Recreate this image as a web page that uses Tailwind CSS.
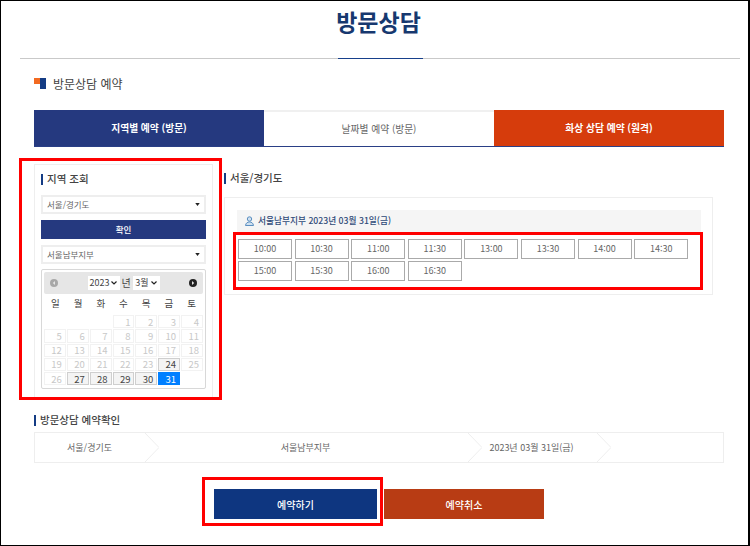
<!DOCTYPE html>
<html lang="ko">
<head>
  <meta charset="UTF-8" />
  <title>방문상담</title>
  <script src="https://cdn.jsdelivr.net/npm/@tailwindcss/browser@4"></script>
</head>
<body class="bg-white">
  <div class="relative w-[750px] h-[546px] box-border border-t border-l border-b border-black border-r-2 overflow-hidden bg-white text-[#555] [font-family:'Noto_Sans_CJK_KR','Noto_Sans',sans-serif]">

    <!-- Title -->
    <h1 class="h-[45px] pt-[4px] text-center text-[23px] leading-[32px] font-bold text-[#17386f] pl-[8px]">방문상담</h1>
    <div class="mt-[12px] ml-[19px] w-[720px] h-[1px] bg-[#c9c9c9] flex justify-center">
      <div class="w-[85px] h-[1px] bg-[#17408b]"></div>
    </div>

    <!-- Section heading -->
    <div class="ml-[33px] mt-[17px] h-[15px] flex items-center gap-[7px]">
      <span class="flex w-[12px] h-[11px] items-start">
        <span class="w-[6px] h-[6px] bg-[#f26a21]"></span>
        <span class="w-[6px] h-[11px] bg-[#143c84]"></span>
      </span>
      <span class="text-[12px] leading-[15px] text-[#444]">방문상담 예약</span>
    </div>

    <!-- Tabs -->
    <div class="ml-[33px] mt-[19px] w-[690px] h-[37px] flex text-[9.75px] font-semibold border-b border-[#2a3f86]">
      <div class="w-[230px] bg-[#25397f] text-white flex items-center justify-center">지역별 예약 (방문)</div>
      <div class="w-[230px] bg-white text-[#666] font-normal border-t-2 border-[#f0f0f0] flex items-center justify-center">날짜별 예약 (방문)</div>
      <div class="w-[230px] bg-[#d63c0c] text-white flex items-center justify-center">화상 상담 예약 (원격)</div>
    </div>

    <!-- Main columns -->
    <div class="ml-[33px] mt-[17px] flex items-start">
      <aside class="w-[179px] h-[236px] box-border border border-[#eeeeee] px-[6px]">
        <div class="h-[29px] pb-[1px] flex items-center gap-[4px] text-[10.5px] font-medium text-[#444]">
          <span class="w-[2px] h-[11px] bg-[#143c84]"></span>지역 조회
        </div>
        <div class="mt-[1px] h-[19px] box-border border-2 border-[#eeeeee] px-[4px] flex items-center justify-between text-[8.5px] text-[#666]">
          서울/경기도
          <svg width="5" height="3" viewBox="0 0 6 4"><path d="M0 0h6L3 4z" fill="#222"/></svg>
        </div>
        <div class="mt-[6px] h-[19px] bg-[#25397f] text-white text-[8.5px] font-medium flex items-center justify-center">확인</div>
        <div class="mt-[6px] h-[19px] box-border border-2 border-[#eeeeee] px-[4px] flex items-center justify-between text-[8.5px] text-[#666]">
          서울남부지부
          <svg width="5" height="3" viewBox="0 0 6 4"><path d="M0 0h6L3 4z" fill="#222"/></svg>
        </div>

        <!-- Calendar -->
        <div class="mt-[5px] h-[120px] box-border border border-[#d8d8d8] rounded-[2px] p-[2px]">
          <div class="h-[22px] bg-[#e6e6e6] rounded-[2px] flex items-center justify-between px-[6px] text-[9px] text-[#444]">
            <svg width="8" height="8" viewBox="0 0 8 8"><circle cx="4" cy="4" r="4" fill="#a8a8a8"/><path d="M5 2L2.8 4 5 6z" fill="#e6e6e6"/></svg>
            <span class="flex items-center">
              <span class="w-[32px] h-[14px] bg-white flex items-center justify-center gap-[2px]">2023
                <svg width="6" height="4" viewBox="0 0 6 4"><path d="M.5.5L3 3 5.5.5" fill="none" stroke="#222" stroke-width="1.2"/></svg>
              </span>
              <span class="w-[13px] text-center text-[10px] -mt-[2px]">년</span>
              <span class="w-[27px] h-[14px] bg-white flex items-center justify-center gap-[2px]">3월
                <svg width="6" height="4" viewBox="0 0 6 4"><path d="M.5.5L3 3 5.5.5" fill="none" stroke="#222" stroke-width="1.2"/></svg>
              </span>
            </span>
            <svg width="8" height="8" viewBox="0 0 8 8"><circle cx="4" cy="4" r="4" fill="#222"/><path d="M3 2L5.2 4 3 6z" fill="#e6e6e6"/></svg>
          </div>
          <div class="h-[21px] pb-[3px] grid grid-cols-7 items-center text-center text-[9.5px] text-[#444]">
            <span>일</span><span>월</span><span>화</span><span>수</span><span>목</span><span>금</span><span>토</span>
          </div>
          <div id="days" class="grid grid-cols-7 gap-x-[1px] gap-y-[1px] text-[9.5px]"></div>
        </div>
      </aside>

      <section class="ml-[11px] w-[489px]">
        <div class="h-[29px] pb-[1px] flex items-center gap-[4px] text-[10.5px] font-medium text-[#444]">
          <span class="w-[2px] h-[11px] bg-[#143c84]"></span>서울/경기도
        </div>
        <div class="mt-[4px] h-[98px] box-border border border-[#eeeeee] pt-[12px] pl-[12px]">
          <div class="w-[464px] h-[22px] bg-[#f5f5f5] pl-[8px] flex items-center gap-[4px] text-[8.7px] font-medium text-[#2f4a78]">
            <svg width="9" height="10" viewBox="0 0 9 10"><circle cx="4.5" cy="3" r="2.2" fill="#cfe0f0" stroke="#5b8fc0" stroke-width="1"/><path d="M.5 9.5C.8 7 2.5 6 4.5 6s3.7 1 4 3.5z" fill="#cfe0f0" stroke="#5b8fc0" stroke-width="1"/></svg>
            서울남부지부 2023년 03월 31일(금)
          </div>
          <div id="times" class="mt-[7px] ml-[1px] grid grid-cols-[repeat(8,54px)] gap-x-[2.6px] gap-y-[2px]"></div>
        </div>
      </section>
    </div>

    <!-- Confirmation -->
    <div class="ml-[33px] mt-[10px] h-[20px] flex items-center gap-[4px] text-[10.5px] font-medium text-[#444]">
      <span class="w-[2px] h-[11px] bg-[#143c84]"></span>방문상담 예약확인
    </div>
    <div class="ml-[33px] mt-[2px] w-[690px] h-[31px] box-border border border-[#eeeeee] flex text-[9px] text-[#666]">
      <div class="relative w-[109px] flex items-center justify-center">서울/경기도
        <svg class="absolute left-full top-[-1px]" width="15" height="31" viewBox="0 0 15 31"><path d="M0 0l15 15.5L0 31" fill="none" stroke="#eeeeee"/></svg>
      </div>
      <div class="relative w-[323px] flex items-center justify-center">서울남부지부
        <svg class="absolute left-full top-[-1px]" width="15" height="31" viewBox="0 0 15 31"><path d="M0 0l15 15.5L0 31" fill="none" stroke="#eeeeee"/></svg>
      </div>
      <div class="relative w-[129px] flex items-center justify-center">2023년 03월 31일(금)
        <svg class="absolute left-full top-[-1px]" width="15" height="31" viewBox="0 0 15 31"><path d="M0 0l15 15.5L0 31" fill="none" stroke="#eeeeee"/></svg>
      </div>
    </div>

    <!-- Actions -->
    <div class="ml-[213px] mt-[26px] flex gap-[7px] text-[10px] font-medium text-white">
      <button class="w-[163px] h-[30px] bg-[#0e3680]">예약하기</button>
      <button class="w-[160px] h-[30px] bg-[#b83c14]">예약취소</button>
    </div>

    <!-- Red annotation boxes -->
    <div class="absolute left-[18px] top-[157px] w-[203px] h-[242px] border-[3px] border-[#ff0000]"></div>
    <div class="absolute left-[232px] top-[231px] w-[470px] h-[58px] border-[3px] border-[#ff0000]"></div>
    <div class="absolute left-[201px] top-[476px] w-[181px] h-[49px] border-[3px] border-[#ff0000]"></div>
  </div>

  <script>
    const times = ['10:00','10:30','11:00','11:30','13:00','13:30','14:00','14:30','15:00','15:30','16:00','16:30'];
    document.getElementById('times').innerHTML = times.map(t =>
      `<div class="h-[20px] box-border border border-[#aaaaaa] flex items-center justify-center text-[9px] text-[#666]">${t}</div>`
    ).join('');

    // March 2023 starts on a Wednesday, slots open only on 24 and 27-31
    const open = [24, 27, 28, 29, 30];
    let cells = '<span></span><span></span><span></span>';
    for (let d = 1; d <= 31; d++) {
      let cls = 'h-[13.3px] box-border border border-[#f2f2f2] text-[#c8c8c8] flex items-center justify-end pr-[3px]';
      if (open.includes(d)) cls = 'h-[13.3px] box-border border border-[#cfcfcf] bg-[#f4f4f4] text-[#444] flex items-center justify-end pr-[3px]';
      if (d === 31) cls = 'h-[13.3px] box-border border border-[#007fff] bg-[#007fff] text-white flex items-center justify-end pr-[3px]';
      cells += `<span class="${cls}">${d}</span>`;
    }
    document.getElementById('days').innerHTML = cells;
  </script>
</body>
</html>
